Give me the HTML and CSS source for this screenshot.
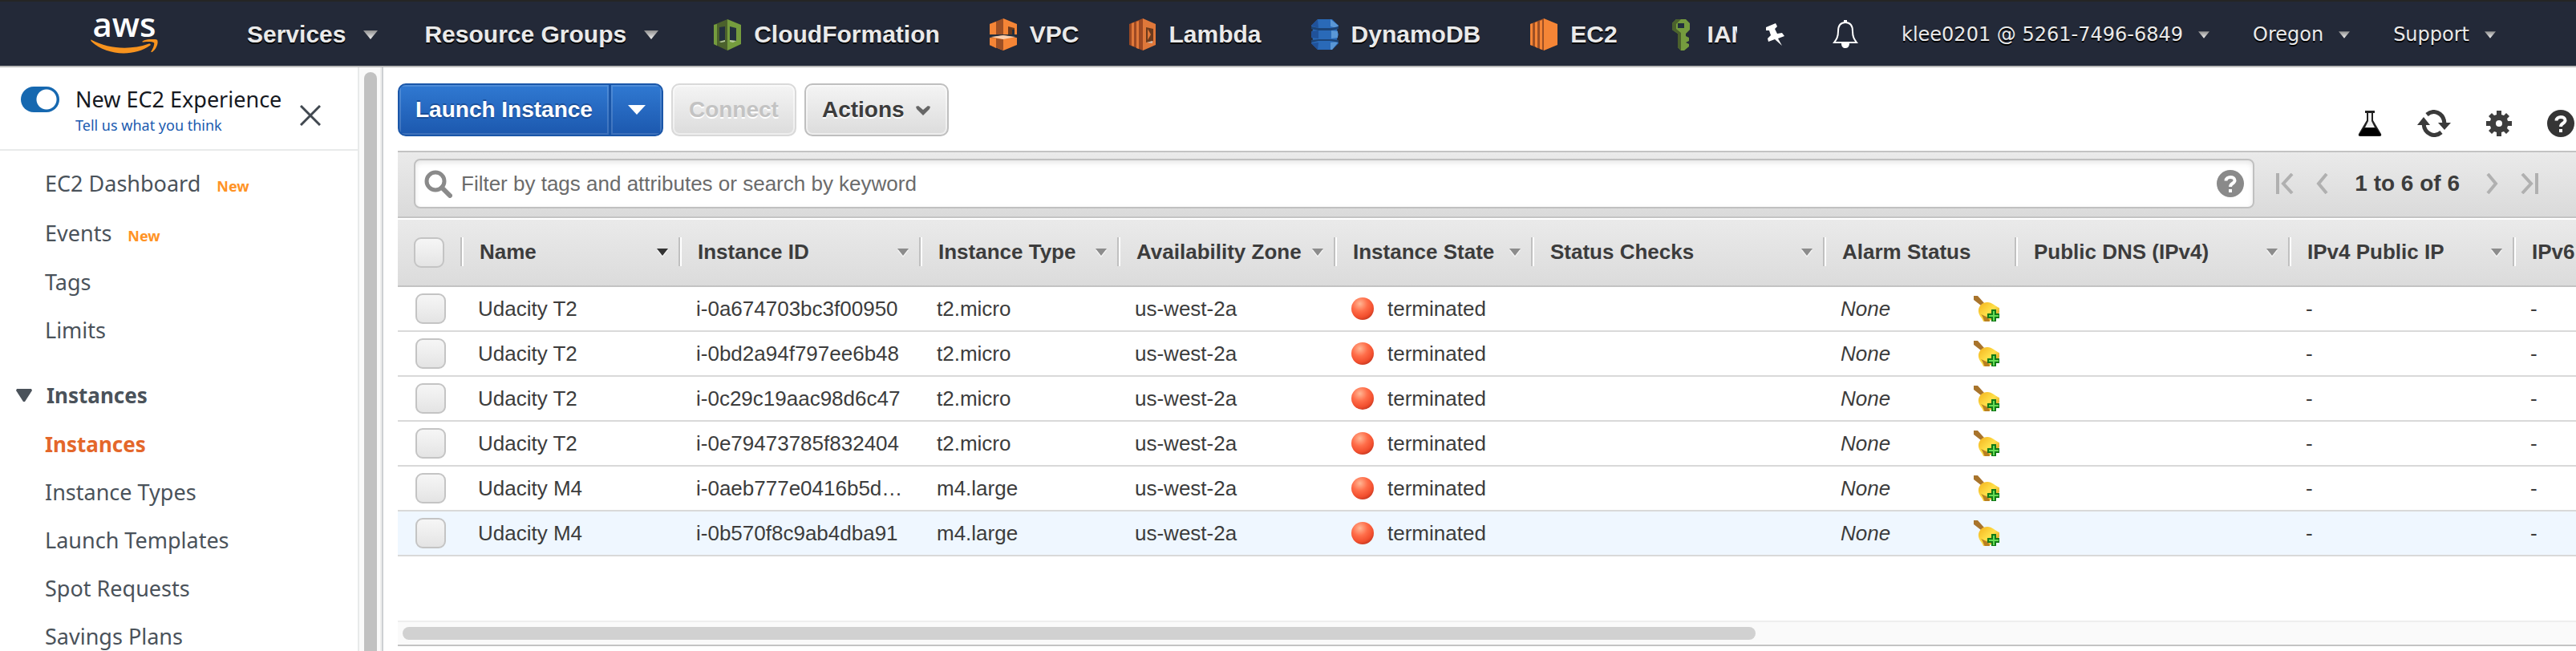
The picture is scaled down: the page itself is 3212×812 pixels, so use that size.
FILE: index.html
```html
<!DOCTYPE html>
<html lang="en">
<head>
<meta charset="utf-8">
<title>Instances | EC2 Management Console</title>
<link rel="stylesheet" href="styles.css">
</head>
<body>
<svg class="sprite" aria-hidden="true">
  <defs>
    <linearGradient id="caret-light" x1="0" y1="0" x2="0" y2="1"><stop offset="0" stop-color="#8f8f8f"/><stop offset="1" stop-color="#f2f2f2"/></linearGradient>
    <radialGradient id="ball-fill" cx=".38" cy=".28" r=".75"><stop offset="0" stop-color="#ffb795"/><stop offset=".45" stop-color="#ff6e4a"/><stop offset=".8" stop-color="#f24f2e"/><stop offset="1" stop-color="#c93a22"/></radialGradient>
    <linearGradient id="bell-fill" x1="0" y1="0" x2="1" y2="1"><stop offset="0" stop-color="#f3b21c"/><stop offset=".5" stop-color="#ffe04a"/><stop offset="1" stop-color="#c88716"/></linearGradient>
  </defs>
  <symbol id="i-caret" viewBox="0 0 18 11"><path d="M0 0H18L9 11Z" fill="url(#caret-light)"/></symbol>
  <symbol id="i-sort" viewBox="0 0 14 9"><path d="M0 0H14L7 9Z" fill="currentColor"/></symbol>
  <symbol id="i-ball" viewBox="0 0 28 28"><circle cx="14" cy="14" r="14" fill="url(#ball-fill)"/></symbol>
  <symbol id="i-addalarm" viewBox="0 0 32 32">
    <path d="M0 0H5L13 9L9 12L0 5Z" fill="#a8742c"/>
    <path d="M6 17C7 12 11 8 17 8C23 8 27 13 32 15V21L19 32H12C11 28 5 24 6 17Z" fill="url(#bell-fill)"/>
    <path d="M9 23C12 26 12 30 14 32H20L18 27Z" fill="#b98021"/>
    <path d="M22 17H28V22H32V28H28V32H22V28H17V22H22Z" fill="#127a18"/>
    <path d="M24 19H26V24H31V26H26V31H24V26H19V24H24Z" fill="#66dd55"/>
  </symbol>
  <symbol id="i-help" viewBox="0 0 34 34">
    <circle cx="17" cy="17" r="17" fill="currentColor"/>
    <path d="M11.500 13.500C11.500 7.500 22.500 7.500 22.500 13C22.500 17 17 16.500 17 21" fill="none" stroke="#fff" stroke-width="4"/>
    <path d="M15 24H19V28H15Z" fill="#fff"/>
  </symbol>
</svg>

<header class="nav">
  <a class="logo" href="#" aria-label="AWS home">
    <span class="logo-word">aws</span>
    <svg class="logo-smile" viewBox="0 0 84 28" preserveAspectRatio="none"><path d="M1 1C22 17 50 19 72 8C74 7 76 9 74 11C54 31 20 29 1 4C0 2 0 0 1 1Z" fill="#f7931e"/><path d="M65 3C71-1 80-1 83 1C85 6 82 17 77 22C75 23 75 22 76 20C78 15 80 8 79 6C77 4 71 4 66 5C64 5 64 4 65 3Z" fill="#f7931e"/></svg>
  </a>
  <button class="menu menu-services">Services<svg class="caret"><use href="#i-caret"/></svg></button>
  <button class="menu">Resource Groups<svg class="caret"><use href="#i-caret"/></svg></button>
  <nav class="shortcuts" aria-label="Shortcuts">
    <a href="#"><svg class="service" viewBox="0 0 36 40"><path d="M18 1L35 8V32L18 40Z" fill="#759c3e"/><path d="M18 1L1 8V32L18 40Z" fill="#4b612c"/><path d="M1 8L5 7V34L1 32Z" fill="#759c3e"/><path d="M8 11L15 10V27L8 28ZM21 10L29 12V28L21 27Z" fill="#232f3e"/><path d="M8 29L15 27V29L10 30ZM21 27L29 28L25 30L21 29Z" fill="#b7ca9d"/></svg>CloudFormation</a>
    <a href="#"><svg class="service" viewBox="0 0 36 40"><path d="M18 0L35 7V20H18Z" fill="#f58536"/><path d="M18 0L1 7V20H18Z" fill="#9d5025"/><path d="M1 7L9 4V20H1Z" fill="#f58536"/><path d="M24 10L32 12V20H24Z" fill="#6b3a1d"/><path d="M29 14H32V20H29Z" fill="#232f3e"/><path d="M1 20H35V23H1Z" fill="#232f3e"/><path d="M1 24L18 21L35 24V33L18 40L1 33Z" fill="#f58536"/><path d="M1 24L18 26V40L1 33Z" fill="#9d5025"/><path d="M1 24L9 25V37L1 33Z" fill="#f58536"/><path d="M3 23L18 21L33 23L18 26Z" fill="#fbcfae"/></svg>VPC</a>
    <a href="#"><svg class="service" viewBox="0 0 36 40"><path d="M18 0L34 7V33L18 40Z" fill="#e0783a"/><path d="M18 0L1 7V33L18 40Z" fill="#9d4923"/><path d="M4 6L7 5V35L4 34ZM10 4L13 3V38L10 37Z" fill="#e0783a"/><path d="M22 11L31 13V28L22 30Z" fill="#6b3a1d"/><path d="M24 13L28 20L24 27Z" fill="#e0783a"/><path d="M23 30L30 28V31Z" fill="#c9bdb2"/></svg>Lambda</a>
    <a href="#"><svg class="service" viewBox="0 0 36 40"><path d="M9 1H27L35 9L33 14L35 20L33 26L35 31L27 39H9L1 31L3 26L1 20L3 14L1 9Z" fill="#2a6ab8"/><path d="M25 1L35 9L32 12L25 10ZM26 15L34 16V24L26 25ZM25 30L35 29L27 39H25Z" fill="#5a97d6"/><path d="M1 10L10 12H26L35 10V13L26 15H10L1 13ZM1 27L10 26H26L35 27V30L26 28H10L1 30Z" fill="#1c4375"/><path d="M1 9L9 1L10 12ZM1 16L10 15V25L1 24ZM1 31L10 30L9 39Z" fill="#20529a"/></svg>DynamoDB</a>
    <a href="#"><svg class="service" viewBox="0 0 36 40"><path d="M18 0L35 7V33L18 40Z" fill="#f58536"/><path d="M18 0L1 7V33L18 40Z" fill="#9d5025"/><path d="M1 7L4 6V34L1 33ZM7 5L10 4V37L7 35ZM13 3L16 2V39L13 38Z" fill="#f58536"/></svg>EC2</a>
    <a href="#"><svg class="service" viewBox="0 0 36 40"><path d="M12 1H24L29 6V14L24 19V22L28 24V28L24 30L28 32V35L22 40H18L14 36V19L7 14V6Z" fill="#759c3e"/><path d="M12 1L7 6V14L14 19V36L18 40V18L12 13V7L18 1Z" fill="#4b612c"/><path d="M14 6H22V12H14Z" fill="#232f3e"/></svg>IAM</a>
  </nav>
  <div class="account">
    <button class="plain pin-button" aria-label="Pin shortcuts"><svg class="pin" viewBox="0 0 24 28"><path d="M1 5L13 0L15 4L12 7L15 13L21 12L24 16L16 19L21 28L12 20L4 23L3 19L7 15L5 9H1Z" fill="#fff"/></svg></button>
    <button class="plain" aria-label="Notifications"><svg class="bell" viewBox="0 0 32 36"><path d="M16 3C8 3 7 9 7 14C7 21 5 24 2 28H30C27 24 25 21 25 14C25 9 24 3 16 3Z" fill="none" stroke="#fff" stroke-width="2"/><path d="M14 0H18V4H14ZM11 29H21C21 34 18 35 16 35C13 35 11 33 11 29Z" fill="#fff"/></svg></button>
    <button class="small-menu">klee0201 @ 5261-7496-6849<svg class="caret-s"><use href="#i-caret"/></svg></button>
    <button class="small-menu">Oregon<svg class="caret-s"><use href="#i-caret"/></svg></button>
    <button class="small-menu">Support<svg class="caret-s"><use href="#i-caret"/></svg></button>
  </div>
</header>

<div class="layout">
  <aside class="side">
    <div class="side-content">
      <div class="experience">
        <input class="toggle" type="checkbox" id="exp" checked>
        <div class="exp-text"><label for="exp">New EC2 Experience</label><a href="#">Tell us what you think</a></div>
        <button class="plain close" aria-label="Close"><svg viewBox="0 0 26 26"><path d="M1 1L25 25M25 1L1 25" stroke="#414850" stroke-width="3"/></svg></button>
      </div>
      <nav class="side-nav" aria-label="EC2">
        <a class="tall" href="#">EC2 Dashboard<b>New</b></a>
        <a class="tall" href="#">Events<b>New</b></a>
        <a href="#">Tags</a>
        <a href="#">Limits</a>
        <button class="group"><svg viewBox="0 0 20 16"><path d="M1 0H19L20 2L11 16H9L0 2Z" fill="#4a525a"/></svg>Instances</button>
        <a class="current" href="#">Instances</a>
        <a href="#">Instance Types</a>
        <a href="#">Launch Templates</a>
        <a href="#">Spot Requests</a>
        <a href="#">Savings Plans</a>
      </nav>
    </div>
    <div class="vtrack"><div class="vthumb"></div></div>
  </aside>

  <main class="main">
    <div class="toolbar">
      <div class="split">
        <button class="launch">Launch Instance</button>
        <button class="launch-more" aria-label="More launch options"><svg viewBox="0 0 22 12"><path d="M0 0H22L11 12Z" fill="#fff"/></svg></button>
      </div>
      <button class="btn" disabled>Connect</button>
      <button class="btn actions">Actions<svg viewBox="0 0 20 13"><path d="M1 2L4 1L10 6L16 1L19 2L18 5L10 13L2 5Z" fill="#666"/></svg></button>
      <div class="tools">
        <button class="plain" aria-label="Experiments"><svg class="flask" viewBox="0 0 30 32"><path d="M9 0H21V3H19V12L29 29Q30 32 27 32H3Q0 32 1 29L11 12V3H9Z" fill="#222"/><path d="M13 3H17V13L21 21H9L13 13Z" fill="#eee"/><path d="M7 22H23L29 31H1Z" fill="#000"/></svg></button>
        <button class="plain" aria-label="Refresh"><svg class="refresh" viewBox="0 0 42 34"><path d="M12 6C20-1 33 3 34 17M30 28C22 35 9 31 8 17" fill="none" stroke="#3a3a3a" stroke-width="5"/><path d="M0 19L8 9L16 19ZM26 16H42L34 25Z" fill="#3a3a3a"/></svg></button>
        <button class="plain" aria-label="Settings"><svg class="gear" viewBox="0 0 32 32"><path d="M13 0H19V5L22 6L25 3L29 7L26 10L27 13H32V19H27L26 22L29 25L25 29L22 26L19 27V32H13V27L10 26L7 29L3 25L6 22L5 19H0V13H5L6 10L3 7L7 3L10 6L13 5Z" fill="#3d3d3d"/><circle cx="16" cy="16" r="4" fill="#fff"/></svg></button>
        <button class="plain" aria-label="Help"><svg class="help"><use href="#i-help"/></svg></button>
      </div>
    </div>

    <div class="filterbar">
      <div class="search">
        <svg class="lens" viewBox="0 0 35 35"><circle cx="14" cy="14" r="11" fill="none" stroke="#8a8a8a" stroke-width="5"/><path d="M22 22L32 32" stroke="#8a8a8a" stroke-width="6" stroke-linecap="round"/></svg>
        <input type="text" aria-label="Filter instances" placeholder="Filter by tags and attributes or search by keyword">
        <svg class="help muted"><use href="#i-help"/></svg>
      </div>
      <div class="pager">
        <button class="plain" aria-label="First page"><svg class="p-edge" viewBox="0 0 22 26"><path d="M2 0V26M20 1L9 13L20 25" fill="none" stroke="#b0b0b0" stroke-width="4"/></svg></button>
        <button class="plain" aria-label="Previous page"><svg class="p-step" viewBox="0 0 15 26"><path d="M13 1L3 13L13 25" fill="none" stroke="#b0b0b0" stroke-width="4"/></svg></button>
        <span>1 to 6 of 6</span>
        <button class="plain" aria-label="Next page"><svg class="p-step" viewBox="0 0 15 26"><path d="M2 1L12 13L2 25" fill="none" stroke="#b0b0b0" stroke-width="4"/></svg></button>
        <button class="plain" aria-label="Last page"><svg class="p-edge" viewBox="0 0 22 26"><path d="M20 0V26M2 1L13 13L2 25" fill="none" stroke="#b0b0b0" stroke-width="4"/></svg></button>
      </div>
    </div>

    <div class="grid">
      <table>
        <colgroup><col class="c-check"><col class="c-name"><col class="c-id"><col class="c-type"><col class="c-zone"><col class="c-state"><col class="c-checks"><col class="c-alarm"><col class="c-dns"><col class="c-ip"><col class="c-ip6"></colgroup>
        <thead>
          <tr>
            <th><input type="checkbox" aria-label="Select all"></th>
            <th><div class="th">Name<svg class="sort active"><use href="#i-sort"/></svg></div></th>
            <th><div class="th">Instance ID<svg class="sort"><use href="#i-sort"/></svg></div></th>
            <th><div class="th">Instance Type<svg class="sort"><use href="#i-sort"/></svg></div></th>
            <th><div class="th">Availability Zone<svg class="sort"><use href="#i-sort"/></svg></div></th>
            <th><div class="th">Instance State<svg class="sort"><use href="#i-sort"/></svg></div></th>
            <th><div class="th">Status Checks<svg class="sort"><use href="#i-sort"/></svg></div></th>
            <th><div class="th">Alarm Status</div></th>
            <th><div class="th">Public DNS (IPv4)<svg class="sort"><use href="#i-sort"/></svg></div></th>
            <th><div class="th">IPv4 Public IP<svg class="sort"><use href="#i-sort"/></svg></div></th>
            <th><div class="th">IPv6 IPs</div></th>
          </tr>
        </thead>
        <tbody>
          <tr><td><input type="checkbox" aria-label="Select i-0a674703bc3f00950"></td><td>Udacity T2</td><td>i-0a674703bc3f00950</td><td>t2.micro</td><td>us-west-2a</td><td><div class="state"><svg><use href="#i-ball"/></svg>terminated</div></td><td></td><td><div class="alarm"><i>None</i><svg><use href="#i-addalarm"/></svg></div></td><td></td><td>-</td><td>-</td></tr>
          <tr><td><input type="checkbox" aria-label="Select i-0bd2a94f797ee6b48"></td><td>Udacity T2</td><td>i-0bd2a94f797ee6b48</td><td>t2.micro</td><td>us-west-2a</td><td><div class="state"><svg><use href="#i-ball"/></svg>terminated</div></td><td></td><td><div class="alarm"><i>None</i><svg><use href="#i-addalarm"/></svg></div></td><td></td><td>-</td><td>-</td></tr>
          <tr><td><input type="checkbox" aria-label="Select i-0c29c19aac98d6c47"></td><td>Udacity T2</td><td>i-0c29c19aac98d6c47</td><td>t2.micro</td><td>us-west-2a</td><td><div class="state"><svg><use href="#i-ball"/></svg>terminated</div></td><td></td><td><div class="alarm"><i>None</i><svg><use href="#i-addalarm"/></svg></div></td><td></td><td>-</td><td>-</td></tr>
          <tr><td><input type="checkbox" aria-label="Select i-0e79473785f832404"></td><td>Udacity T2</td><td>i-0e79473785f832404</td><td>t2.micro</td><td>us-west-2a</td><td><div class="state"><svg><use href="#i-ball"/></svg>terminated</div></td><td></td><td><div class="alarm"><i>None</i><svg><use href="#i-addalarm"/></svg></div></td><td></td><td>-</td><td>-</td></tr>
          <tr><td><input type="checkbox" aria-label="Select i-0aeb777e0416b5d"></td><td>Udacity M4</td><td>i-0aeb777e0416b5d…</td><td>m4.large</td><td>us-west-2a</td><td><div class="state"><svg><use href="#i-ball"/></svg>terminated</div></td><td></td><td><div class="alarm"><i>None</i><svg><use href="#i-addalarm"/></svg></div></td><td></td><td>-</td><td>-</td></tr>
          <tr class="hover"><td><input type="checkbox" aria-label="Select i-0b570f8c9ab4dba91"></td><td>Udacity M4</td><td>i-0b570f8c9ab4dba91</td><td>m4.large</td><td>us-west-2a</td><td><div class="state"><svg><use href="#i-ball"/></svg>terminated</div></td><td></td><td><div class="alarm"><i>None</i><svg><use href="#i-addalarm"/></svg></div></td><td></td><td>-</td><td>-</td></tr>
        </tbody>
      </table>
    </div>
    <div class="htrack"><div class="hthumb"></div></div>
  </main>
</div>
</body>
</html>
```

FILE: styles.css
```css
* { box-sizing: border-box; }

html, body { height: 100%; }

body {
  margin: 0;
  display: flex;
  flex-direction: column;
  overflow: hidden;
  background: #fff;
  color: #3c3c3c;
  font: 26px/32px "Liberation Sans", Arial, sans-serif;
}

svg { display: block; flex: none; }
a { color: inherit; text-decoration: none; }
button { font: inherit; color: inherit; margin: 0; white-space: nowrap; }
.sprite { position: absolute; width: 0; height: 0; }
.plain { padding: 0; border: 0; background: none; }

/* top navigation */
.nav {
  flex: none;
  display: flex;
  align-items: center;
  height: 84px;
  padding: 2px 100px 0 113px;
  border-top: 2px solid #252525;
  border-bottom: 2px solid #bababa;
  background: #232938;
  color: #eaeaea;
  text-shadow: 0 2px 0 #000;
}
.logo { width: 84px; margin-right: 111px; text-shadow: none; color: #fff; }
.logo-word { display: block; text-align: center; font: 600 42px/26px "Open Sans", sans-serif; }
.logo-smile { width: 84px; height: 20px; margin-top: 6px; }
.menu {
  display: flex;
  align-items: center;
  gap: 22px;
  padding: 0;
  margin-right: 68px;
  border: 0;
  background: none;
  font-size: 30px;
  font-weight: bold;
  text-shadow: inherit;
}
.menu-services { margin-right: 58px; }
.caret { width: 18px; height: 11px; }
.shortcuts {
  flex: 1;
  min-width: 0;
  display: flex;
  gap: 61px;
  overflow: hidden;
  font-size: 30px;
  font-weight: bold;
}
.shortcuts a { display: flex; align-items: center; gap: 15px; line-height: 40px; }
.service { width: 36px; height: 40px; }
.account { display: flex; align-items: center; gap: 54px; margin-left: 35px; }
.pin-button { margin-right: 6px; }
.pin { width: 24px; height: 28px; }
.bell { width: 32px; height: 36px; }
.small-menu {
  display: flex;
  align-items: center;
  gap: 19px;
  padding: 0;
  border: 0;
  background: none;
  font: 24px/32px "DejaVu Sans", Verdana, sans-serif;
  text-shadow: inherit;
}
.caret-s { width: 14px; height: 9px; }

.layout { flex: 1; min-height: 0; display: flex; }

/* sidebar */
.side {
  flex: none;
  display: flex;
  width: 478px;
  overflow: hidden;
  border-right: 2px solid #cdd0d3;
  font-family: "Noto Sans", sans-serif;
  color: #4a525a;
}
.side-content { flex: 1; border-right: 2px solid #e8eaea; overflow: hidden; }
.vtrack { width: 28px; padding: 6px 6px 0; background: #fafafa; border-right: 2px solid #eee; }
.vthumb { width: 16px; height: 100%; border-radius: 8px 8px 0 0; background: #c1c1c1; }
.experience {
  display: flex;
  align-items: flex-start;
  height: 104px;
  padding: 24px 46px 0 26px;
  border-bottom: 2px solid #e8eaea;
}
.toggle {
  appearance: none;
  width: 48px;
  height: 32px;
  margin: 0;
  border-radius: 16px;
  background: radial-gradient(circle at 32px 16px, #fff 12px, #1668b0 13px);
}
.exp-text { flex: 1; display: flex; flex-direction: column; padding-left: 20px; color: #16191f; }
.exp-text label { font-size: 27px; line-height: 32px; white-space: nowrap; }
.exp-text a { color: #1a5bb0; font-size: 18px; line-height: 32px; }
.close { width: 26px; height: 26px; margin-top: 23px; }
.side-nav { display: flex; flex-direction: column; padding-top: 10px; font-size: 27px; }
.side-nav a { padding-left: 56px; line-height: 60px; white-space: nowrap; }
.side-nav a.tall { line-height: 62px; }
.side-nav b { margin-left: 20px; font-size: 18px; line-height: 18px; color: #ff9325; }
.side-nav a.current { font-size: 26px; font-weight: bold; color: #e4672a; }
.group {
  display: flex;
  align-items: center;
  gap: 18px;
  height: 62px;
  margin-top: 20px;
  padding: 0 0 0 20px;
  border: 0;
  background: none;
  font-size: 26px;
  font-weight: bold;
}
.group svg { width: 20px; height: 16px; }

/* main column */
.main { flex: 1; min-width: 0; padding-left: 18px; }
.toolbar { display: flex; align-items: center; gap: 10px; height: 104px; padding-top: 2px; }
.split, .btn { height: 66px; border-radius: 10px; font-size: 28px; font-weight: bold; }
.split {
  display: flex;
  border: 2px solid #1a56a8;
  background: linear-gradient(#3079d2, #1c58ae);
  color: #fff;
  overflow: hidden;
}
.split button { border: 0; background: none; box-shadow: inset 0 0 0 2px #ffffff26; }
.launch { padding: 0 20px; font-weight: bold; text-shadow: 0 -2px 0 #1b4f99, 0 2px 0 #1b4f99; }
.split .launch-more { width: 66px; padding: 0 21px; border-left: 3px solid #1a56a8; }
.launch-more svg { width: 22px; height: 12px; }
.btn {
  display: flex;
  align-items: center;
  gap: 13px;
  padding: 0 20px;
  border: 2px solid #bfbfbf;
  background: linear-gradient(#f4f4f4, #dcdcdc);
  box-shadow: inset 0 0 0 2px #ffffff80;
  text-shadow: 0 2px 0 #fff;
}
.btn:disabled { border-color: #d9d9d9; color: #c3c3c3; }
.btn svg { width: 20px; height: 13px; }
.tools { display: flex; align-items: center; gap: 44px; margin-left: auto; padding: 34px 2px 0 0; }
.flask { width: 30px; height: 32px; }
.refresh { width: 42px; height: 34px; }
.gear { width: 32px; height: 32px; }
.help { width: 34px; height: 34px; color: #353535; }
.muted { color: #8a8a8a; }

.filterbar {
  display: flex;
  align-items: center;
  height: 84px;
  padding: 0 47px 2px 20px;
  border-top: 2px solid #c3c3c3;
  border-bottom: 2px solid #c3c3c3;
  background: linear-gradient(#eaeaea, #dadada);
}
.search {
  flex: 1;
  display: flex;
  align-items: center;
  gap: 11px;
  height: 62px;
  padding: 0 11px;
  border: 2px solid #c0c0c0;
  border-radius: 8px;
  background: #fff;
  box-shadow: inset 0 3px 6px #0000001a;
}
.search input { flex: 1; padding: 0; border: 0; outline: 0; background: none; font: inherit; }
.search input::placeholder { color: #6b6b6b; }
.lens { width: 35px; height: 35px; }
.pager { display: flex; align-items: center; gap: 28px; padding-left: 27px; font-size: 28px; font-weight: bold; white-space: nowrap; }
.pager span { margin: 0 5px; }
.p-edge { width: 22px; height: 26px; }
.p-step { width: 15px; height: 26px; }

/* instances table */
.grid { height: 502px; padding-top: 2px; overflow: hidden; }
table { width: 2918px; border-collapse: separate; border-spacing: 0; table-layout: fixed; }
.c-check { width: 78px; }
.c-name { width: 272px; }
.c-id { width: 300px; }
.c-type { width: 247px; }
.c-zone { width: 270px; }
.c-state { width: 246px; }
.c-checks { width: 364px; }
.c-alarm { width: 239px; }
.c-dns { width: 341px; }
.c-ip { width: 280px; }
.c-ip6 { width: 281px; }
th, td { padding: 0; text-align: left; white-space: nowrap; }
thead tr { background: linear-gradient(#eaeaea, #dbdbdb); }
th { height: 84px; border-bottom: 2px solid #c3c3c3; }
.th {
  display: flex;
  align-items: center;
  justify-content: space-between;
  height: 36px;
  margin-bottom: 2px;
  padding: 0 13px 0 22px;
  border-left: 2px solid #c0c0c0;
  box-shadow: inset 2px 0 0 #fff;
}
.sort { width: 14px; height: 9px; color: #8c8c8c; filter: drop-shadow(0 2px 0 #f6f6f6); }
.sort.active { color: #333; }
td { height: 56px; padding-left: 22px; border-bottom: 2px solid #d9d9d9; }
th:first-child { padding-left: 20px; }
.hover td { background: #eff7ff; }
table input {
  display: block;
  appearance: none;
  width: 38px;
  height: 38px;
  margin: 0;
  border: 2px solid #c4c4c4;
  border-radius: 9px;
  background: linear-gradient(#f6f6f6, #e4e4e4);
}
.state { display: flex; align-items: center; gap: 17px; }
.state svg { width: 28px; height: 28px; }
.alarm { display: flex; align-items: center; justify-content: space-between; padding-right: 19px; }
.alarm svg { width: 32px; height: 32px; }

.htrack { height: 32px; padding: 6px; border-top: 2px solid #eee; border-bottom: 2px solid #c3c3c3; background: #fafafa; }
.hthumb { width: 62.4%; height: 16px; border-radius: 8px; background: #d1d1d1; }
```
